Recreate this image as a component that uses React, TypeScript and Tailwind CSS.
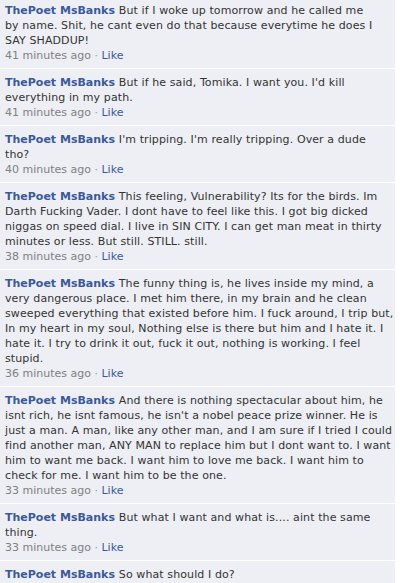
import React from "react";

type Comment = {
  lines: string[];
  time?: string;
};

const comments: Comment[] = [
  {
    lines: [
      "But if I woke up tomorrow and he called me",
      "by name. Shit, he cant even do that because everytime he does I",
      "SAY SHADDUP!",
    ],
    time: "41 minutes ago",
  },
  {
    lines: ["But if he said, Tomika. I want you. I'd kill", "everything in my path."],
    time: "41 minutes ago",
  },
  {
    lines: ["I'm tripping. I'm really tripping. Over a dude", "tho?"],
    time: "40 minutes ago",
  },
  {
    lines: [
      "This feeling, Vulnerability? Its for the birds. Im",
      "Darth Fucking Vader. I dont have to feel like this. I got big dicked",
      "niggas on speed dial. I live in SIN CITY. I can get man meat in thirty",
      "minutes or less. But still. STILL. still.",
    ],
    time: "38 minutes ago",
  },
  {
    lines: [
      "The funny thing is, he lives inside my mind, a",
      "very dangerous place. I met him there, in my brain and he clean",
      "sweeped everything that existed before him. I fuck around, I trip but,",
      "In my heart in my soul, Nothing else is there but him and I hate it. I",
      "hate it. I try to drink it out, fuck it out, nothing is working. I feel",
      "stupid.",
    ],
    time: "36 minutes ago",
  },
  {
    lines: [
      "And there is nothing spectacular about him, he",
      "isnt rich, he isnt famous, he isn't a nobel peace prize winner. He is",
      "just a man. A man, like any other man, and I am sure if I tried I could",
      "find another man, ANY MAN to replace him but I dont want to. I want",
      "him to want me back. I want him to love me back. I want him to",
      "check for me. I want him to be the one.",
    ],
    time: "33 minutes ago",
  },
  {
    lines: ["But what I want and what is.... aint the same", "thing."],
    time: "33 minutes ago",
  },
  {
    // last one is cut off by the window, its time line never shows
    lines: ["So what should I do?"],
  },
];

const CommentRow = ({ comment, first }: { comment: Comment; first: boolean }) => (
  <div className={`px-[5px] pt-[6px] pb-[5px] ${first ? "" : "border-t border-white"}`}>
    <div className="text-[#333333] whitespace-nowrap tracking-[0.1px]">
      {comment.lines.map((line, i) => (
        <div key={i}>
          {i === 0 && (
            <span className="font-bold text-[#3b5998] tracking-normal">ThePoet MsBanks </span>
          )}
          {line}
        </div>
      ))}
    </div>
    {comment.time && (
      <div className="text-[#808080]">
        {comment.time} <span className="text-[#999999]">·</span>{" "}
        <span className="text-[#3b5998]">Like</span>
      </div>
    )}
  </div>
);

export default function App() {
  return (
    <div
      className="h-[583px] w-[419px] overflow-hidden bg-white text-[11px] leading-[15px]"
      style={{ fontFamily: 'Tahoma, "DejaVu Sans", sans-serif' }}
    >
      <div className="-mt-[3px] w-[395px] bg-[#edeff4] pb-[20px]">
        {comments.map((c, i) => (
          <CommentRow key={i} comment={c} first={i === 0} />
        ))}
      </div>
    </div>
  );
}
